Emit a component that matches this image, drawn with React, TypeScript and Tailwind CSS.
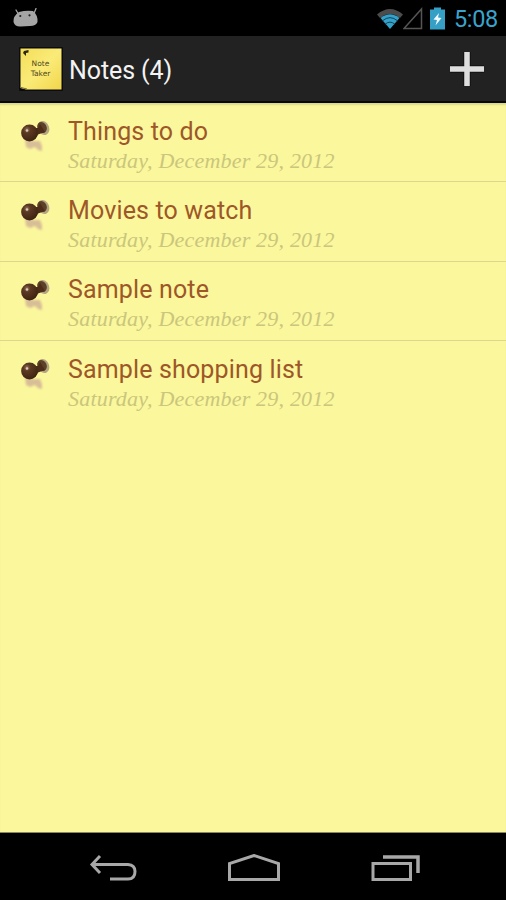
interface Note {
  id: number;
  title: string;
  date: string;
}

const NOTES: Note[] = [
  { id: 1, title: "Things to do", date: "Saturday, December 29, 2012" },
  { id: 2, title: "Movies to watch", date: "Saturday, December 29, 2012" },
  { id: 3, title: "Sample note", date: "Saturday, December 29, 2012" },
  { id: 4, title: "Sample shopping list", date: "Saturday, December 29, 2012" },
];

function StatusBar() {
  return (
    <div className="flex h-9 shrink-0 items-center justify-between bg-black pl-3 pr-2 pt-px">
      <svg width="28" height="20" viewBox="0 0 28 20" className="mb-px" aria-hidden="true">
        <path d="M4 2l3 5M24 0.500l-2 5" stroke="#a5a5a5" strokeWidth="1.300" strokeLinecap="round" />
        <path
          d="M7 4Q14 2 21 3Q26 7 25.500 14Q24 18 18 18L9 18.500Q3 19 1.500 14Q1 8 7 4Z"
          fill="#a5a5a5"
        />
        <circle cx="8.300" cy="8" r="1.100" fill="#222" />
        <circle cx="17.500" cy="7.300" r="1.100" fill="#222" />
      </svg>
      <div className="flex items-center">
        <svg width="28" height="22" viewBox="0 0 28 22" className="-mr-px" aria-hidden="true">
          <path d="M1 6.500Q14 -4.500 27 6.500L24 10Q14 2 4 10Z" fill="#4c4c4c" />
          <path d="M4.500 10Q14 2.500 23.500 10L14 21Z" fill="#35a0c8" />
          <path
            d="M6.500 12.800Q14 6.500 21.500 12.800M9.300 16Q14 12.300 18.700 16"
            fill="none"
            stroke="#0d4459"
            strokeWidth="1"
          />
        </svg>
        <svg width="20" height="23" viewBox="0 0 20 23" aria-hidden="true">
          <path d="M1 21.500L18.500 2V21.500Z" fill="none" stroke="#555" strokeWidth="1.500" />
        </svg>
        <svg width="15" height="23" viewBox="0 0 15 23" className="ml-[7px]" aria-hidden="true">
          <path d="M4 0.500H11V2.500H15V22.500H0V2.500H4Z" fill="#359fc5" />
          <path d="M9 6L3.500 12.500L7 13L5.500 18.500L11.500 11L8 10.500Z" fill="#f1fbff" />
        </svg>
        <span className="ml-[9px] pt-0.5 text-[23.500px] leading-none tracking-[-0.3px] text-[#39a4cd]">
          5:08
        </span>
      </div>
    </div>
  );
}

function AppIcon() {
  return (
    <svg width="44" height="44" viewBox="0 0 44 44" className="mt-px shrink-0" aria-hidden="true">
      <defs>
        <linearGradient id="sticky" x1="0" y1="0" x2="1" y2="1">
          <stop offset="0" stopColor="#f4de58" />
          <stop offset="0.500" stopColor="#faeb78" />
          <stop offset="1" stopColor="#f2d64b" />
        </linearGradient>
      </defs>
      <rect width="44" height="44" rx="1" fill="#0b0b0d" />
      <path d="M1.500 1.500H42.500V42.500H7L1.500 41Z" fill="url(#sticky)" />
      <path d="M5 4L9.500 3V5.500L7 6V9L4 6Z" fill="#2e260a" />
      <path d="M2 40.500L8 42" stroke="#776c28" strokeWidth="1" />
      <g
        fill="#51491d"
        fontFamily="'DejaVu Sans', sans-serif"
        fontSize="7.500"
        textAnchor="middle"
      >
        <text x="21.500" y="18.500">Note</text>
        <text x="21.500" y="29">Taker</text>
      </g>
    </svg>
  );
}

function ActionBar() {
  return (
    <header className="flex h-[67px] shrink-0 items-center border-b-2 border-[#08080c] bg-[#222222] pl-[19px] pr-[21px]">
      <AppIcon />
      <h1 className="ml-1.5 pt-1 text-[25px] leading-none tracking-[-0.1px] text-[#f3f3f3]">
        Notes ({NOTES.length})
      </h1>
      <button type="button" aria-label="Add note" className="ml-auto pt-px">
        <svg width="36" height="36" viewBox="0 0 36 36">
          <path d="M18 1V35M1 18H35" stroke="#151515" strokeWidth="8" />
          <path d="M18 1V35M1 18H35" stroke="#dedede" strokeWidth="5.500" />
        </svg>
      </button>
    </header>
  );
}

function PinIcon() {
  return (
    <svg width="32" height="34" viewBox="0 0 32 34" className="mt-[17px] shrink-0" aria-hidden="true">
      <defs>
        <radialGradient id="pinHead" cx="0.350" cy="0.300" r="0.700">
          <stop offset="0" stopColor="#94705a" />
          <stop offset="0.300" stopColor="#5c3a22" />
          <stop offset="1" stopColor="#402512" />
        </radialGradient>
        <filter id="pinShadow" x="-30%" y="-30%" width="160%" height="160%">
          <feGaussianBlur stdDeviation="1" />
        </filter>
      </defs>
      <path
        d="M5 19L14 21L20 21L22 26L22 31L18 30L15 27L10 29L6 27Z"
        fill="#d2b596"
        opacity="0.850"
        filter="url(#pinShadow)"
      />
      <ellipse cx="23.500" cy="8" rx="5.600" ry="7.200" transform="rotate(-22 23.500 8)" fill="#b3a681" />
      <ellipse cx="22" cy="7.500" rx="4.600" ry="5.800" transform="rotate(-25 22 7.500)" fill="#5d4028" />
      <path d="M12 8L18 8L20 4L25 12L18 14.500L15 19Z" fill="#4b2d19" />
      <circle cx="9.500" cy="13" r="8.400" fill="url(#pinHead)" />
      <circle cx="7" cy="10.500" r="1.300" fill="#d8cabb" />
    </svg>
  );
}

function NoteRow({ note }: { note: Note }) {
  return (
    <li className="flex h-[79.400px] border-b border-[#dcd78b] pl-5 last:border-b-0">
      <PinIcon />
      <div className="ml-4 pt-[13.500px]">
        <h2 className="text-[25px] leading-[30px] tracking-[0.15px] text-[#9d5728]">
          {note.title}
        </h2>
        <p className="whitespace-nowrap font-['Liberation_Serif',serif] text-[22px] italic leading-[28px] tracking-[0.2px] text-[#cac67d]">
          {note.date}
        </p>
      </div>
    </li>
  );
}

function NavBar() {
  return (
    <nav className="flex h-[67px] shrink-0 items-center justify-between bg-black pl-[89px] pr-[85px] pt-[5px] text-[#a8a8a8]">
      <button type="button" aria-label="Back">
        <svg width="49" height="30" viewBox="0 0 49 30" fill="none" stroke="currentColor" strokeWidth="3">
          <path d="M11 2L3 10.500L11 19M3 10.500H39Q46 11 46 17.500Q46 25 39 25H21" />
        </svg>
      </button>
      <button type="button" aria-label="Home">
        <svg width="54" height="30" viewBox="0 0 54 30" fill="none" stroke="currentColor" strokeWidth="3">
          <path d="M1.500 25.500V9.500L26 1.500L50.500 9.500V25.500Z" />
        </svg>
      </button>
      <button type="button" aria-label="Recent apps">
        <svg width="50" height="30" viewBox="0 0 50 30" fill="none" stroke="currentColor" strokeWidth="3">
          <path d="M2 9.500H39.500V25.500H2Z" />
          <path d="M12 3H47V19" strokeWidth="3.500" />
        </svg>
      </button>
    </nav>
  );
}

export default function App() {
  return (
    <div className="flex h-[900px] w-[506px] flex-col overflow-hidden bg-black font-[Roboto,sans-serif]">
      <StatusBar />
      <ActionBar />
      <main className="min-h-0 flex-1 border-b border-[#8c8857] bg-[#fbf79c] shadow-[inset_0_3px_2px_-1px_#dcd78b]">
        <ul>
          {NOTES.map((note) => (
            <NoteRow key={note.id} note={note} />
          ))}
        </ul>
      </main>
      <NavBar />
    </div>
  );
}
